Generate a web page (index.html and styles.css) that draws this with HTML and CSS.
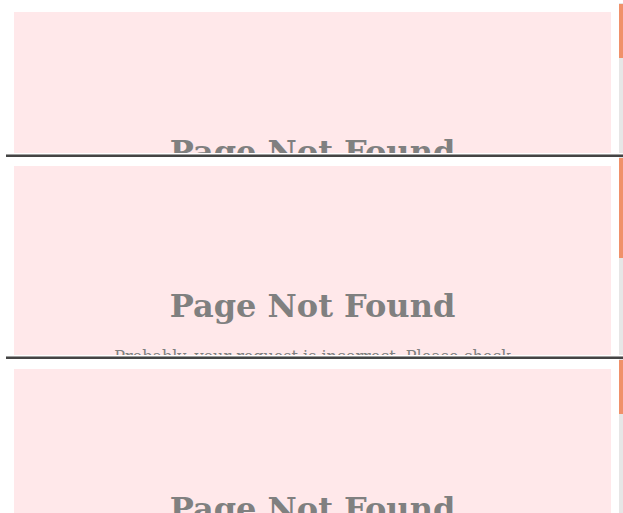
FILE: index.html
```html
<!DOCTYPE html>
<html lang="en">
<head>
<meta charset="utf-8">
<title>Frames</title>
<link rel="stylesheet" href="styles.css">
</head>
<body>
<div class="stack">
  <div class="frame frame-short">
    <div class="viewport">
      <div class="page">
        <h1 class="title">Page Not Found</h1>
        <p class="message">Probably, your request is incorrect. Please check the URL and try again.</p>
      </div>
    </div>
    <div class="scrollbar"><div class="thumb thumb-short"></div></div>
  </div>
  <div class="frame frame-tall">
    <div class="viewport">
      <div class="page">
        <h1 class="title">Page Not Found</h1>
        <p class="message">Probably, your request is incorrect. Please check the URL and try again.</p>
      </div>
    </div>
    <div class="scrollbar"><div class="thumb thumb-tall"></div></div>
  </div>
  <div class="frame frame-last">
    <div class="viewport">
      <div class="page page-last">
        <h1 class="title">Page Not Found</h1>
        <p class="message">Probably, your request is incorrect. Please check the URL and try again.</p>
      </div>
    </div>
    <div class="scrollbar"><div class="thumb thumb-short"></div></div>
  </div>
</div>
</body>
</html>
```
FILE: styles.css
```css
html, body {
  margin: 0;
  padding: 0;
  background: #ffffff;
  overflow: hidden;
}

.stack {
  display: flex;
  flex-direction: column;
  padding: 3px 0 0 6px;
  height: 513px;
  box-sizing: border-box;
  overflow: hidden;
}

.frame {
  display: flex;
  flex-direction: row;
  background: #ffffff;
  flex: none;
}

.frame-short {
  height: 150px;
  border-bottom: 1px solid #9c9c9c;
  padding-bottom: 1px;
}

.frame-tall {
  height: 198px;
  border-top: 2px solid #444444;
  border-bottom: 1px solid #9c9c9c;
  padding-bottom: 1px;
}

.frame-last {
  flex: 1;
  min-height: 0;
  border-top: 2px solid #444444;
}

.viewport {
  flex: 1;
  overflow: hidden;
}

.scrollbar {
  width: 4px;
  background: #e6e6e6;
  display: flex;
  flex-direction: column;
}

.thumb {
  background: #f0916a;
  margin-top: 1px;
}

.thumb-short {
  height: 54px;
}

.thumb-tall {
  height: 100px;
}

.page {
  margin: 9px 8px 0;
  padding: 100px 0 120px;
  background: #ffe8ea;
  text-align: center;
  color: #808080;
  font-family: "DejaVu Serif", serif;
}

.page-last {
  margin-top: 10px;
}

.title {
  font-size: 32px;
  font-weight: bold;
  margin: 21.44px 0;
}

.message {
  font-size: 16px;
  max-width: 410px;
  margin: 16px auto;
}
```
